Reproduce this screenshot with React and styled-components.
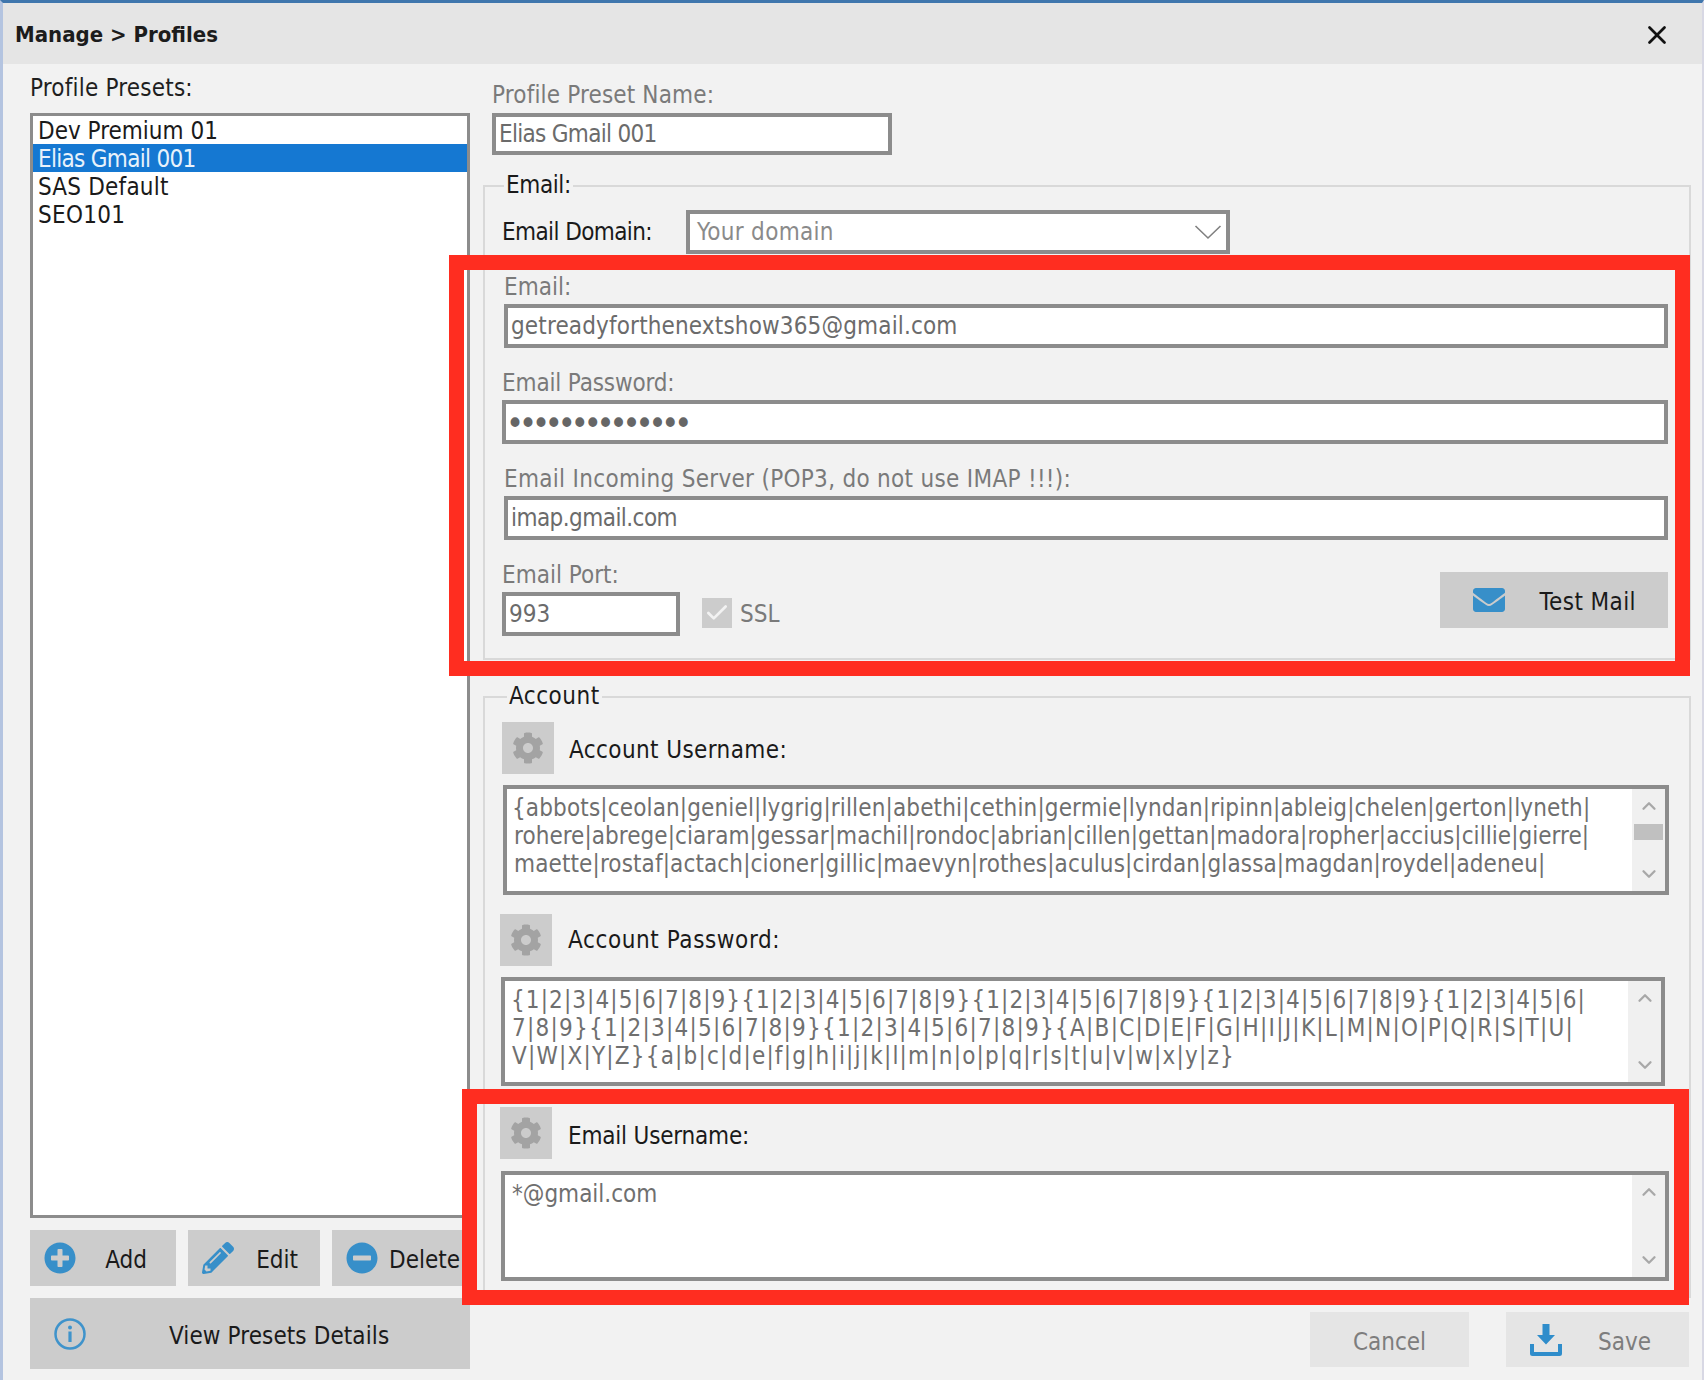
import styled, { createGlobalStyle } from 'styled-components';
import { Check, ChevronDown, ChevronUp, X } from 'lucide-react';
import { FaCog, FaEnvelope, FaMinusCircle, FaPencilAlt, FaPlusCircle } from 'react-icons/fa';

const track = props => (props.$track ? `letter-spacing: ${props.$track}px;` : '');

const GlobalStyle = createGlobalStyle`
  html, body {
    margin: 0;
    padding: 0;
    background: #f2f2f2;
  }
  * {
    box-sizing: border-box;
  }
`;

const Window = styled.div`
  position: relative;
  width: 1704px;
  height: 1380px;
  overflow: hidden;
  display: flex;
  flex-direction: column;
  background: #f2f2f2;
  border-top: 3px solid #3f76ad;
  border-left: 3px solid #b4c4e0;
  border-right: 2px solid #d8d8e4;
  font-family: "DejaVu Sans Condensed", "DejaVu Sans", sans-serif;
  font-stretch: condensed;
  font-size: 24px;
  color: #1a1a1a;
`;

const TitleBar = styled.div`
  height: 61px;
  flex: none;
  display: flex;
  align-items: center;
  justify-content: space-between;
  margin-left: -3px;
  padding: 2px 30px 0 12px;
  border-left: 3px solid #3f76ad;
  background: #e5e5e5;
`;

const Title = styled.div`
  font-size: 22px;
  font-weight: 700;
  color: #1c1c1c;
`;

const Body = styled.div`
  flex: 1;
  display: flex;
  padding-left: 27px;
`;

const LeftColumn = styled.div`
  width: 440px;
  flex: none;
  display: flex;
  flex-direction: column;
`;

const PanelLabel = styled.div`
  height: 49px;
  line-height: 48px;
  color: #1f1f1f;
  ${track}
`;

const ListBox = styled.div`
  height: 1105px;
  border: 3.5px solid #8c8c8c;
  background: #fff;
`;

const ListItem = styled.div`
  height: 28px;
  line-height: 31px;
  padding-left: 5px;
  background: ${props => (props.$selected ? '#1578d2' : 'transparent')};
  color: ${props => (props.$selected ? '#e8f2fb' : '#1a1a1a')};
  ${track}
`;

const ButtonRow = styled.div`
  display: flex;
  gap: 12px;
  margin-top: 12px;
`;

const ButtonText = styled.span`
  padding-top: 4px;
  ${track}
`;

const ToolButton = styled.div`
  width: ${props => props.$width}px;
  height: 56px;
  flex: none;
  display: flex;
  align-items: center;
  justify-content: space-between;
  padding: 0 ${props => props.$right}px 0 14px;
  background: #cccccc;
  color: #1a1a1a;
  overflow: hidden;
  white-space: nowrap;
`;

const DetailsButton = styled.div`
  height: 71px;
  margin-top: 12px;
  display: flex;
  align-items: center;
  padding-left: 24px;
  background: #cccccc;
`;

const DetailsText = styled(ButtonText)`
  margin-left: 83px;
`;

const RightColumn = styled.div`
  width: 1208px;
  margin-left: 13px;
  flex: none;
  display: flex;
  flex-direction: column;
`;

const PresetBlock = styled.div`
  height: 121px;
  padding-left: 9px;
`;

const GrayLabel = styled.div`
  height: ${props => props.$height || 34}px;
  padding-top: ${props => props.$pad || 0}px;
  line-height: 34px;
  color: #7a7a7a;
  ${track}
`;

const Input = styled.div`
  width: ${props => (props.$width ? `${props.$width}px` : 'auto')};
  height: ${props => props.$height || 44}px;
  line-height: ${props => (props.$height || 44) - 8}px;
  padding-left: 3px;
  border: 4px solid #8c8c8c;
  background: #fff;
  color: #6b6b6b;
  white-space: nowrap;
  ${track}
`;

const Group = styled.fieldset`
  position: relative;
  height: ${props => props.$height}px;
  margin: ${props => props.$offset || 0}px 0 0;
  padding: ${props => props.$top}px 21px 0 17px;
  border: 2px solid #d9d9d9;
  min-width: 0;
`;

const Legend = styled.div`
  position: absolute;
  top: -18px;
  left: ${props => props.$left}px;
  padding: 0 2px;
  line-height: 32px;
  background: #f2f2f2;
  color: #1a1a1a;
  ${track}
`;

const DomainRow = styled.div`
  display: flex;
  align-items: center;
  height: 44px;
`;

const DomainLabel = styled.div`
  width: 184px;
  flex: none;
  ${track}
`;

const Select = styled.div`
  width: 544px;
  height: 44px;
  display: flex;
  align-items: center;
  justify-content: space-between;
  padding: 0 4px 0 7px;
  border: 4px solid #8c8c8c;
  background: #fff;
  color: #8a8a8a;
  ${track}
`;

const Field = styled.div`
  margin-top: ${props => props.$gap ?? 18}px;
  margin-left: ${props => props.$inset || 0}px;
`;

const Dots = styled.span`
  display: block;
  margin-left: -3px;
  height: 36px;
  line-height: 38px;
  font-size: 34px;
  letter-spacing: -5.1px;
  color: #666;
`;

const PortRow = styled.div`
  display: flex;
  align-items: flex-end;
  margin-top: 18px;
`;

const PortField = styled.div`
  width: 178px;
  flex: none;
`;

const CheckBox = styled.div`
  width: 30px;
  height: 30px;
  margin: 0 8px 8px 22px;
  display: flex;
  align-items: center;
  justify-content: center;
  background: #cccccc;
  color: #f2f2f2;
`;

const CheckLabel = styled.div`
  height: 30px;
  line-height: 32px;
  margin-bottom: 8px;
  color: #7a7a7a;
`;

const TestButton = styled.div`
  width: 228px;
  height: 56px;
  margin: 0 0 8px auto;
  display: flex;
  align-items: center;
  justify-content: space-between;
  padding: 0 32px 0 33px;
  background: #cccccc;
`;

const SettingRow = styled.div`
  display: flex;
  align-items: center;
  height: 52px;
  margin-top: ${props => props.$gap}px;
  margin-left: ${props => props.$inset || 0}px;
`;

const GearButton = styled.div`
  width: 52px;
  height: 52px;
  flex: none;
  display: flex;
  align-items: center;
  justify-content: center;
  margin-right: ${props => props.$space}px;
  background: #cccccc;
  color: #a3a3a3;
`;

const SettingLabel = styled.div`
  padding-top: ${props => props.$pad || 0}px;
  color: #1a1a1a;
  ${track}
`;

const TextArea = styled.div`
  display: flex;
  height: ${props => props.$height}px;
  margin-top: ${props => props.$gap || 11}px;
  margin-left: ${props => props.$inset || 0}px;
  margin-right: ${props => props.$outset || 0}px;
  border: 4px solid #8c8c8c;
  background: #fff;
`;

const TextBody = styled.div`
  flex: 1;
  padding: 5px 0 0 7px;
  color: #6f6f6f;
  line-height: 28px;
  white-space: nowrap;
  overflow: hidden;
`;

const TextLine = styled.div`
  height: 28px;
  margin-left: ${props => props.$shift || 0}px;
  ${track}
`;

const ScrollBar = styled.div`
  width: 33px;
  flex: none;
  display: flex;
  flex-direction: column;
  align-items: center;
  justify-content: space-between;
  padding: 6px 0;
  background: #f0f0f0;
  color: #a8a8a8;
  position: relative;
`;

const ScrollThumb = styled.div`
  position: absolute;
  top: 35px;
  left: 2px;
  width: 29px;
  height: 16px;
  background: #c0c0c0;
`;

const Footer = styled.div`
  display: flex;
  justify-content: flex-end;
  gap: 37px;
  margin-top: 14px;
  padding-right: 2px;
`;

const FooterButton = styled.div`
  width: ${props => props.$width}px;
  height: 55px;
  display: flex;
  align-items: center;
  justify-content: ${props => (props.$icon ? 'space-between' : 'center')};
  padding: ${props => (props.$icon ? '0 38px 0 24px' : '0')};
  background: #e5e5e5;
  color: #7d7d7d;
`;

const Highlight = styled.div`
  position: absolute;
  left: ${props => props.$x - 3}px;
  top: ${props => props.$y - 3}px;
  width: ${props => props.$w}px;
  height: ${props => props.$h}px;
  border: 15px solid #ff2d20;
  pointer-events: none;
`;

const InfoIcon = () => (
  <svg width="32" height="32" viewBox="0 0 32 32" fill="none">
    <circle cx="16" cy="16" r="14.5" stroke="#3f93cb" strokeWidth="2.5" />
    <circle cx="16" cy="9.5" r="2" fill="#3f93cb" />
    <rect x="14.4" y="13.5" width="3.2" height="10.5" fill="#3f93cb" />
  </svg>
);

const SaveIcon = () => (
  <svg width="32" height="32" viewBox="0 0 32 32" fill="#2f8dcb">
    <path d="M12.5 0h7v11h5.5L16 20.5 7 11h5.5z" />
    <path d="M0 20h4v8h24v-8h4v9.5a2.5 2.5 0 0 1-2.5 2.5h-27A2.5 2.5 0 0 1 0 29.5z" />
  </svg>
);

const SelectArrow = () => (
  <svg width="28" height="16" viewBox="0 0 28 16" fill="none">
    <path d="M1.5 2 14 14 26.5 2" stroke="#808080" strokeWidth="1.6" />
  </svg>
);

const usernames = [
  { text: '{abbots|ceolan|geniel|lygrig|rillen|abethi|cethin|germie|lyndan|ripinn|ableig|chelen|gerton|lyneth|', track: 0.14, shift: -2 },
  { text: 'rohere|abrege|ciaram|gessar|machil|rondoc|abrian|cillen|gettan|madora|ropher|accius|cillie|gierre|', track: 0.05 },
  { text: 'maette|rostaf|actach|cioner|gillic|maevyn|rothes|aculus|cirdan|glassa|magdan|roydel|adeneu|', track: 0.12 },
];

const passwords = [
  { text: '{1|2|3|4|5|6|7|8|9}{1|2|3|4|5|6|7|8|9}{1|2|3|4|5|6|7|8|9}{1|2|3|4|5|6|7|8|9}{1|2|3|4|5|6|', track: 1.1, shift: -1 },
  { text: '7|8|9}{1|2|3|4|5|6|7|8|9}{1|2|3|4|5|6|7|8|9}{A|B|C|D|E|F|G|H|I|J|K|L|M|N|O|P|Q|R|S|T|U|', track: 1.25 },
  { text: 'V|W|X|Y|Z}{a|b|c|d|e|f|g|h|i|j|k|l|m|n|o|p|q|r|s|t|u|v|w|x|y|z}', track: 1.2 },
];

const Scroller = ({ thumb }) => (
  <ScrollBar>
    <ChevronUp size={22} strokeWidth={2.5} />
    {thumb && <ScrollThumb />}
    <ChevronDown size={22} strokeWidth={2.5} />
  </ScrollBar>
);

const Lines = ({ rows }) => (
  <TextBody>
    {rows.map(row => (
      <TextLine key={row.text} $track={row.track} $shift={row.shift}>{row.text}</TextLine>
    ))}
  </TextBody>
);

const App = () => {
  return (
    <Window>
      <GlobalStyle />
      <TitleBar>
        <Title>Manage &gt; Profiles</Title>
        <X size={30} strokeWidth={2.2} color="#111" />
      </TitleBar>
      <Body>
        <LeftColumn>
          <PanelLabel $track={0.2}>Profile Presets:</PanelLabel>
          <ListBox>
            <ListItem>Dev Premium 01</ListItem>
            <ListItem $selected $track={-0.7}>Elias Gmail 001</ListItem>
            <ListItem $track={0.2}>SAS Default</ListItem>
            <ListItem $track={0.3}>SEO101</ListItem>
          </ListBox>
          <ButtonRow>
            <ToolButton $width={146} $right={29}>
              <FaPlusCircle size={32} color="#378fc9" />
              <ButtonText>Add</ButtonText>
            </ToolButton>
            <ToolButton $width={132} $right={22}>
              <FaPencilAlt size={32} color="#378fc9" />
              <ButtonText>Edit</ButtonText>
            </ToolButton>
            <ToolButton $width={138} $right={10}>
              <FaMinusCircle size={32} color="#378fc9" />
              <ButtonText>Delete</ButtonText>
            </ToolButton>
          </ButtonRow>
          <DetailsButton>
            <InfoIcon />
            <DetailsText $track={0.1}>View Presets Details</DetailsText>
          </DetailsButton>
        </LeftColumn>
        <RightColumn>
          <PresetBlock>
            <GrayLabel $height={49} $pad={14} $track={0.16}>Profile Preset Name:</GrayLabel>
            <Input $width={400} $height={42} $track={-0.7}>Elias Gmail 001</Input>
          </PresetBlock>
          <Group $height={475} $top={23}>
            <Legend $left={19} $track={-0.4}>Email:</Legend>
            <DomainRow>
              <DomainLabel $track={-0.6}>Email Domain:</DomainLabel>
              <Select $track={0.3}>
                Your domain
                <SelectArrow />
              </Select>
            </DomainRow>
            <Field $gap={16} $inset={2}>
              <GrayLabel>Email:</GrayLabel>
              <Input $track={0.15}>getreadyforthenextshow365@gmail.com</Input>
            </Field>
            <Field>
              <GrayLabel $track={-0.15}>Email Password:</GrayLabel>
              <Input><Dots>••••••••••••••</Dots></Input>
            </Field>
            <Field $inset={2}>
              <GrayLabel $track={0.3}>Email Incoming Server (POP3, do not use IMAP !!!):</GrayLabel>
              <Input $track={-0.55}>imap.gmail.com</Input>
            </Field>
            <PortRow>
              <PortField>
                <GrayLabel>Email Port:</GrayLabel>
                <Input>993</Input>
              </PortField>
              <CheckBox><Check size={26} strokeWidth={2.5} /></CheckBox>
              <CheckLabel>SSL</CheckLabel>
              <TestButton>
                <FaEnvelope size={32} color="#378fc9" />
                <ButtonText $track={0.4}>Test Mail</ButtonText>
              </TestButton>
            </PortRow>
          </Group>
          <Group $height={602} $top={23} $offset={36}>
            <Legend $left={22} $track={0.5}>Account</Legend>
            <SettingRow $gap={1} $inset={0}>
              <GearButton $space={15}><FaCog size={32} /></GearButton>
              <SettingLabel $pad={3} $track={0.4}>Account Username:</SettingLabel>
            </SettingRow>
            <TextArea $height={110} $inset={1} $outset={-1}>
              <Lines rows={usernames} />
              <Scroller thumb />
            </TextArea>
            <SettingRow $gap={19} $inset={-2}>
              <GearButton $space={16}><FaCog size={32} /></GearButton>
              <SettingLabel $track={0.6}>Account Password:</SettingLabel>
            </SettingRow>
            <TextArea $height={109} $inset={-1} $outset={3}>
              <Lines rows={passwords} />
              <Scroller />
            </TextArea>
            <SettingRow $gap={21} $inset={-2}>
              <GearButton $space={16}><FaCog size={32} /></GearButton>
              <SettingLabel $pad={5} $track={-0.2}>Email Username:</SettingLabel>
            </SettingRow>
            <TextArea $height={110} $inset={-1} $outset={-1} $gap={12}>
              <TextBody>*@gmail.com</TextBody>
              <Scroller />
            </TextArea>
          </Group>
          <Footer>
            <FooterButton $width={159}><ButtonText>Cancel</ButtonText></FooterButton>
            <FooterButton $width={183} $icon>
              <SaveIcon />
              <ButtonText>Save</ButtonText>
            </FooterButton>
          </Footer>
        </RightColumn>
      </Body>
      <Highlight $x={449} $y={255} $w={1241} $h={421} />
      <Highlight $x={462} $y={1089} $w={1227} $h={216} />
    </Window>
  );
};

export default App;
